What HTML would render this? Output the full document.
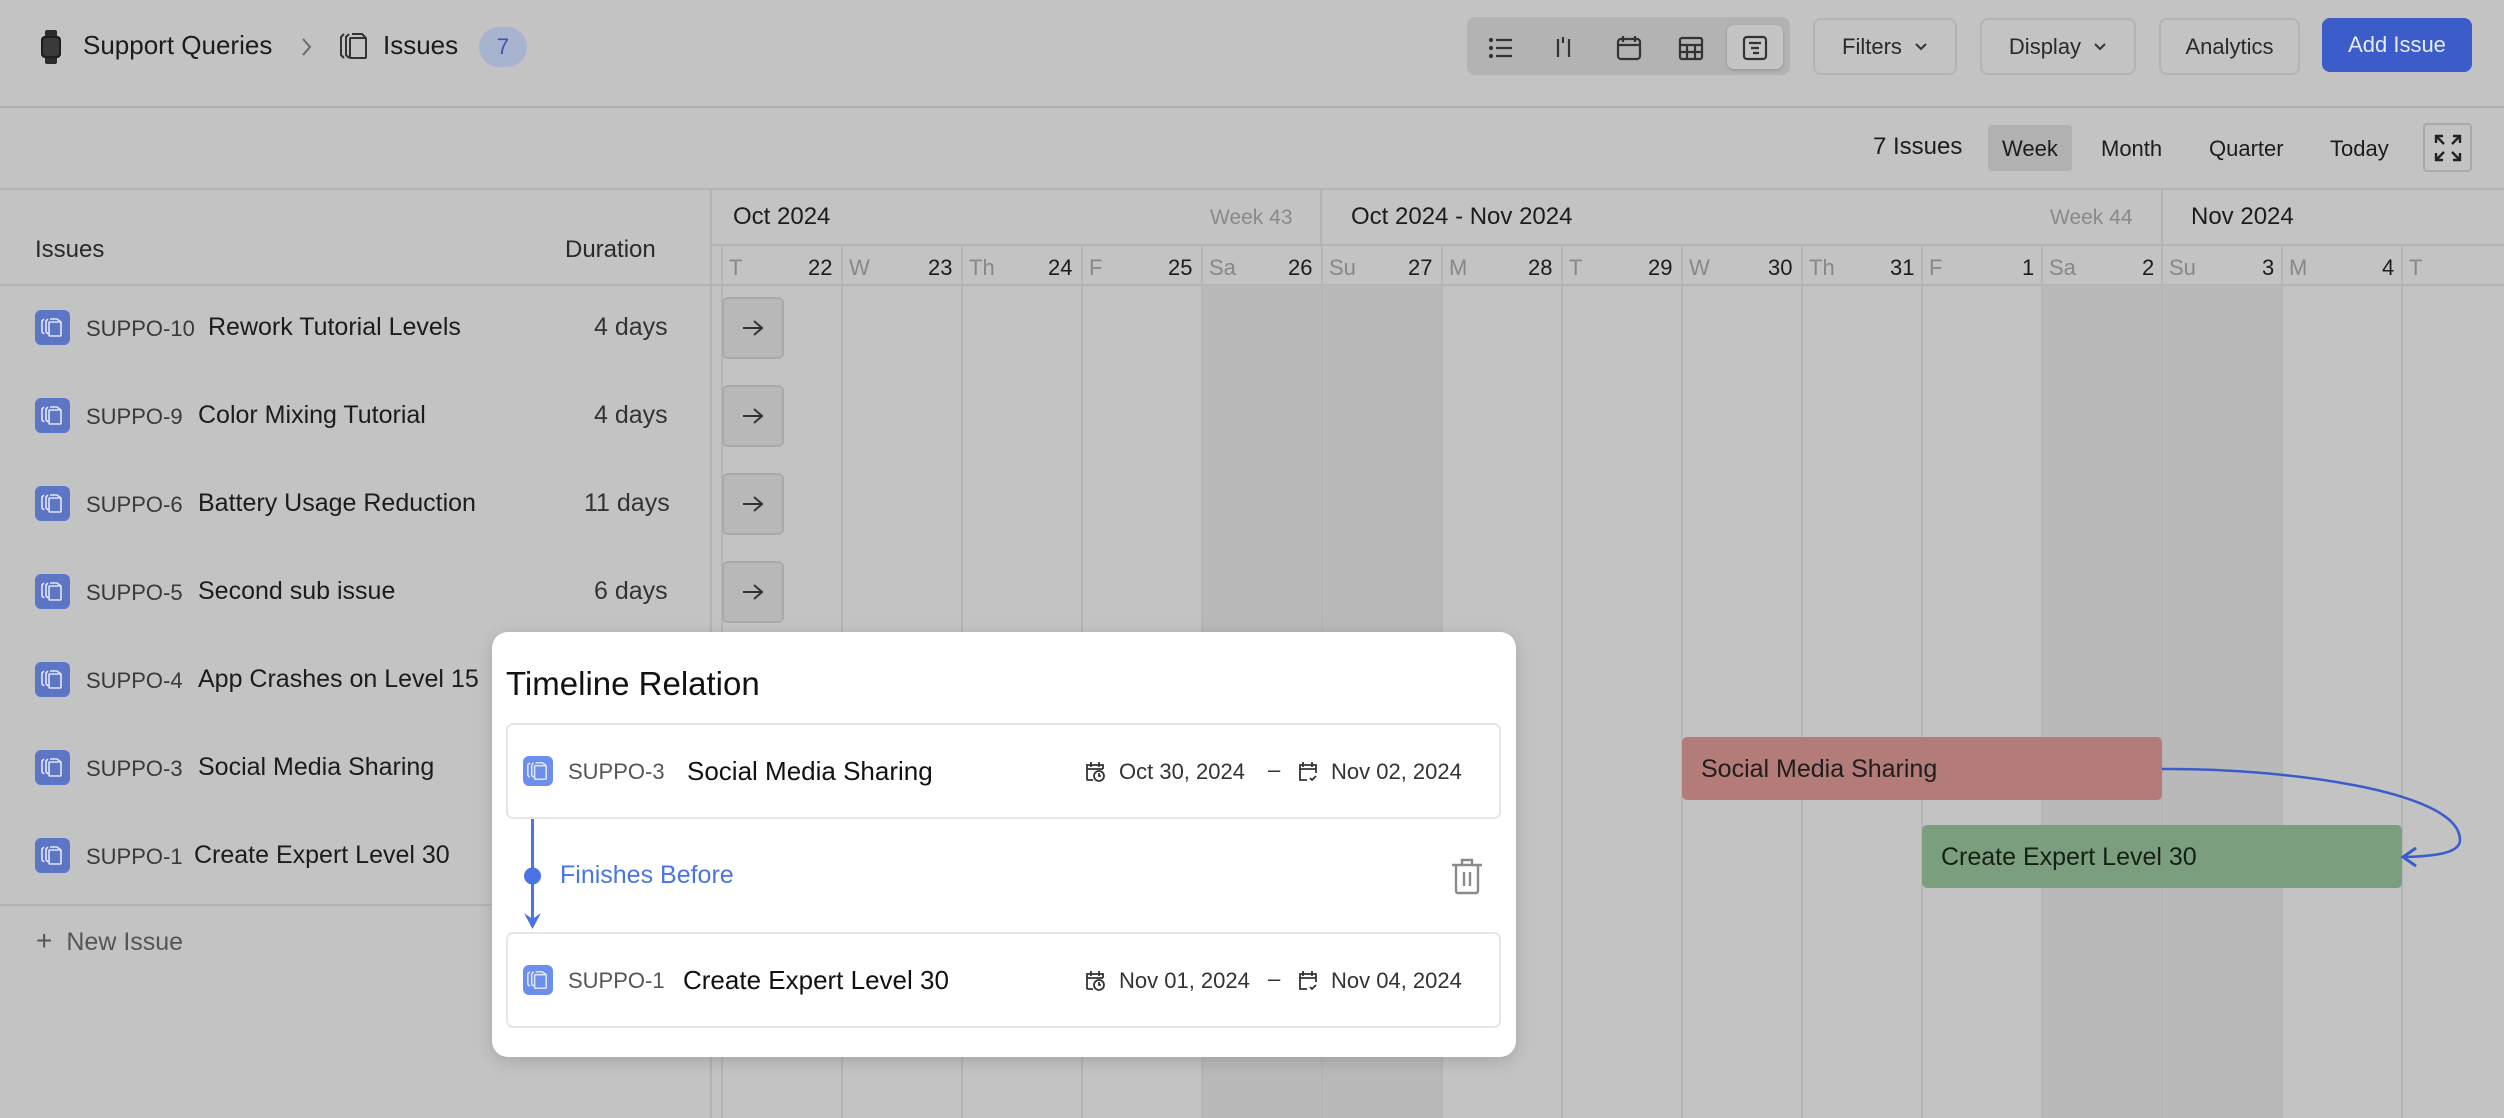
<!DOCTYPE html>
<html><head><meta charset="utf-8"><style>
*{box-sizing:border-box;margin:0;padding:0}
body{width:2504px;height:1118px;overflow:hidden;background:#c3c3c3;font-family:"Liberation Sans",sans-serif;color:#1c1c1c;position:relative}
.a{position:absolute}
.t{position:absolute;white-space:nowrap}
.btn{position:absolute;border:2px solid #b3b3b3;border-radius:8px;background:#c3c3c3;font-size:22px;color:#2a2a2a;display:flex;align-items:center;justify-content:center;gap:12px}
.vl{position:absolute;top:189px;width:2px;background:#b5b5b5}
.ic{position:absolute;width:35px;height:35px;border-radius:6px;background:#5c76c4}
.row .id{font-size:22px;color:#3a3a3a}
.arr{position:absolute;left:722px;width:62px;height:62px;border:2px solid #a9a9a9;border-radius:6px;background:#b8b8b8;display:flex;align-items:center;justify-content:center}
</style></head><body>
<div class="a" style="left:0;top:106px;width:2504px;height:2px;background:#b0b0b0"></div>
<svg class="a" style="left:40px;top:30px" width="22" height="34" viewBox="0 0 22 34"><rect x="5" y="0" width="12" height="34" rx="2" fill="#2b2b2b"/><rect x="1" y="6" width="20" height="22" rx="4" fill="#1e1e1e"/><rect x="3" y="8" width="16" height="18" rx="3" fill="#3a3a3a"/></svg>
<div class="t" style="left:83px;top:30px;font-size:26px">Support Queries</div>
<svg class="a" style="left:300px;top:36px" width="14" height="22"><path d="M3 3l7 8-7 8" stroke="#6a6a6a" stroke-width="2" fill="none"/></svg>
<svg class="a" style="left:338px;top:30px" width="32" height="32" viewBox="0 0 32 32" fill="none" stroke="#333" stroke-width="2"><path d="M6 4l-3 3v18l3 3M11 4l-3 3v18l3 3"/><rect x="12" y="8" width="16" height="20" rx="1"/><path d="M14 4h10l4 4"/></svg>
<div class="t" style="left:383px;top:30px;font-size:26px">Issues</div>
<div class="a" style="left:479px;top:27px;width:48px;height:40px;border-radius:20px;background:#a8b3cf;color:#3d57b5;font-size:22px;text-align:center;line-height:40px">7</div>

<div class="a" style="left:1467px;top:17px;width:323px;height:58px;border-radius:8px;background:#b3b3b3"></div>
<div class="a" style="left:1727px;top:25px;width:56px;height:44px;border-radius:7px;background:#c4c4c4;box-shadow:0 1px 3px rgba(0,0,0,.2)"></div>
<svg class="a" style="left:1488px;top:35px" width="280" height="26" viewBox="0 0 280 26" fill="none" stroke="#333" stroke-width="2.2">
<path d="M8 5h16M8 13h16M8 21h16"/><circle cx="3" cy="5" r="1" fill="#333"/><circle cx="3" cy="13" r="1" fill="#333"/><circle cx="3" cy="21" r="1" fill="#333"/>
<path d="M70 4v18M75 2v6M81 4v18"/>
<rect x="130" y="4" width="22" height="20" rx="3"/><path d="M130 10h22M135 1v6M147 1v6"/>
<rect x="192" y="3" width="22" height="21" rx="2"/><path d="M192 10h22M192 17h22M199 10v14M207 10v14"/>
<rect x="256" y="2" width="22" height="22" rx="3"/><path d="M261 8h12M263 13h8M265 18h6"/>
</svg>
<div class="btn" style="left:1813px;top:18px;width:144px;height:57px">Filters <svg width="14" height="10"><path d="M2 2l5 5 5-5" stroke="#333" stroke-width="2" fill="none"/></svg></div>
<div class="btn" style="left:1980px;top:18px;width:156px;height:57px">Display <svg width="14" height="10"><path d="M2 2l5 5 5-5" stroke="#333" stroke-width="2" fill="none"/></svg></div>
<div class="btn" style="left:2159px;top:18px;width:141px;height:57px">Analytics</div>
<div class="btn" style="left:2322px;top:18px;width:150px;height:54px;background:#3b5cc9;border-color:#3b5cc9;color:#e6ebf7">Add Issue</div>

<div class="a" style="left:0;top:188px;width:2504px;height:2px;background:#b3b3b3"></div>
<div class="t" style="left:1873px;top:133px;font-size:24px;color:#1c1c1c">7 Issues</div>
<div class="a" style="left:1988px;top:125px;width:84px;height:46px;border-radius:4px;background:#b1b1b1"></div>
<div class="t" style="left:2002px;top:136px;font-size:22px">Week</div>
<div class="t" style="left:2101px;top:136px;font-size:22px">Month</div>
<div class="t" style="left:2209px;top:136px;font-size:22px">Quarter</div>
<div class="t" style="left:2330px;top:136px;font-size:22px">Today</div>
<div class="a" style="left:2423px;top:123px;width:49px;height:49px;border:2px solid #aaa;border-radius:4px"></div>
<svg class="a" style="left:2433px;top:133px" width="30" height="30" fill="none" stroke="#222" stroke-width="2.4"><path d="M3 10V3h7M3 3l8 8M27 10V3h-7M27 3l-8 8M3 20v7h7M3 27l8-8M27 20v7h-7M27 27l-8-8"/></svg>

<div class="t" style="left:35px;top:236px;font-size:24px;color:#2a2a2a">Issues</div>
<div class="t" style="left:565px;top:236px;font-size:24px;color:#2a2a2a">Duration</div>
<div class="a" style="left:0;top:284px;width:711px;height:2px;background:#b3b3b3"></div>
<div class="a" style="left:710px;top:189px;width:2px;height:929px;background:#b3b3b3"></div>
<div class="a" style="left:0;top:904px;width:711px;height:2px;background:#b3b3b3"></div>
<div class="t" style="left:36px;top:925px;font-size:25px;color:#555"><span style="font-size:28px;margin-right:14px">+</span>New Issue</div>

<div class="a" style="left:711px;top:244px;width:1793px;height:2px;background:#b3b3b3"></div>
<div class="a" style="left:711px;top:284px;width:1793px;height:2px;background:#b3b3b3"></div>
<div class="a" style="left:1320px;top:189px;width:2px;height:56px;background:#b3b3b3"></div>
<div class="a" style="left:2161px;top:189px;width:2px;height:56px;background:#b3b3b3"></div>
<div class="t" style="left:733px;top:203px;font-size:24px">Oct 2024</div>
<div class="t" style="left:1210px;top:206px;font-size:21px;color:#8a8a8a">Week 43</div>
<div class="t" style="left:1351px;top:203px;font-size:24px">Oct 2024 - Nov 2024</div>
<div class="t" style="left:2050px;top:206px;font-size:21px;color:#8a8a8a">Week 44</div>
<div class="t" style="left:2191px;top:203px;font-size:24px">Nov 2024</div>

<div class="a" style="left:1202px;top:285px;width:240px;height:833px;background:#b9b9b9"></div>
<div class="a" style="left:2042px;top:285px;width:240px;height:833px;background:#b9b9b9"></div>
<div class="vl" style="left:721px;top:245px;height:873px"></div>
<div class="vl" style="left:841px;top:245px;height:873px"></div>
<div class="vl" style="left:961px;top:245px;height:873px"></div>
<div class="vl" style="left:1081px;top:245px;height:873px"></div>
<div class="vl" style="left:1201px;top:245px;height:873px"></div>
<div class="vl" style="left:1321px;top:245px;height:873px"></div>
<div class="vl" style="left:1441px;top:245px;height:873px"></div>
<div class="vl" style="left:1561px;top:245px;height:873px"></div>
<div class="vl" style="left:1681px;top:245px;height:873px"></div>
<div class="vl" style="left:1801px;top:245px;height:873px"></div>
<div class="vl" style="left:1921px;top:245px;height:873px"></div>
<div class="vl" style="left:2041px;top:245px;height:873px"></div>
<div class="vl" style="left:2161px;top:245px;height:873px"></div>
<div class="vl" style="left:2281px;top:245px;height:873px"></div>
<div class="vl" style="left:2401px;top:245px;height:873px"></div>

<div style="position:absolute;top:255px;left:0;font-size:22px">
<span class="t" style="left:729px;color:#888">T</span><span class="t" style="left:808px">22</span>
<span class="t" style="left:849px;color:#888">W</span><span class="t" style="left:928px">23</span>
<span class="t" style="left:969px;color:#888">Th</span><span class="t" style="left:1048px">24</span>
<span class="t" style="left:1089px;color:#888">F</span><span class="t" style="left:1168px">25</span>
<span class="t" style="left:1209px;color:#888">Sa</span><span class="t" style="left:1288px">26</span>
<span class="t" style="left:1329px;color:#888">Su</span><span class="t" style="left:1408px">27</span>
<span class="t" style="left:1449px;color:#888">M</span><span class="t" style="left:1528px">28</span>
<span class="t" style="left:1569px;color:#888">T</span><span class="t" style="left:1648px">29</span>
<span class="t" style="left:1689px;color:#888">W</span><span class="t" style="left:1768px">30</span>
<span class="t" style="left:1809px;color:#888">Th</span><span class="t" style="left:1890px">31</span>
<span class="t" style="left:1929px;color:#888">F</span><span class="t" style="left:2022px">1</span>
<span class="t" style="left:2049px;color:#888">Sa</span><span class="t" style="left:2142px">2</span>
<span class="t" style="left:2169px;color:#888">Su</span><span class="t" style="left:2262px">3</span>
<span class="t" style="left:2289px;color:#888">M</span><span class="t" style="left:2382px">4</span>
<span class="t" style="left:2409px;color:#888">T</span>
</div>

<svg width="0" height="0" style="position:absolute"><defs><g id="ii" fill="none" stroke="#dfe6f7" stroke-width="1.6"><path d="M9 9l-2 2v11l2 2M13 9l-2 2v11l2 2"/><rect x="14" y="12" width="12" height="14" rx="1"/><path d="M15 9h7l4 3"/></g></defs></svg>
<div class="row">
<div class="ic" style="top:310px;left:35px"><svg width="35" height="35"><use href="#ii"/></svg></div><div class="t id" style="left:86px;top:316px">SUPPO-10</div><div class="t" style="left:208px;top:313px;font-size:25px">Rework Tutorial Levels</div><div class="t" style="left:594px;top:313px;font-size:25px;color:#333">4 days</div>
<div class="ic" style="top:398px;left:35px"><svg width="35" height="35"><use href="#ii"/></svg></div><div class="t id" style="left:86px;top:404px">SUPPO-9</div><div class="t" style="left:198px;top:401px;font-size:25px">Color Mixing Tutorial</div><div class="t" style="left:594px;top:401px;font-size:25px;color:#333">4 days</div>
<div class="ic" style="top:486px;left:35px"><svg width="35" height="35"><use href="#ii"/></svg></div><div class="t id" style="left:86px;top:492px">SUPPO-6</div><div class="t" style="left:198px;top:489px;font-size:25px">Battery Usage Reduction</div><div class="t" style="left:584px;top:489px;font-size:25px;color:#333">11 days</div>
<div class="ic" style="top:574px;left:35px"><svg width="35" height="35"><use href="#ii"/></svg></div><div class="t id" style="left:86px;top:580px">SUPPO-5</div><div class="t" style="left:198px;top:577px;font-size:25px">Second sub issue</div><div class="t" style="left:594px;top:577px;font-size:25px;color:#333">6 days</div>
<div class="ic" style="top:662px;left:35px"><svg width="35" height="35"><use href="#ii"/></svg></div><div class="t id" style="left:86px;top:668px">SUPPO-4</div><div class="t" style="left:198px;top:665px;font-size:25px">App Crashes on Level 15</div>
<div class="ic" style="top:750px;left:35px"><svg width="35" height="35"><use href="#ii"/></svg></div><div class="t id" style="left:86px;top:756px">SUPPO-3</div><div class="t" style="left:198px;top:753px;font-size:25px">Social Media Sharing</div>
<div class="ic" style="top:838px;left:35px"><svg width="35" height="35"><use href="#ii"/></svg></div><div class="t id" style="left:86px;top:844px">SUPPO-1</div><div class="t" style="left:194px;top:841px;font-size:25px">Create Expert Level 30</div>
</div>
<div class="arr" style="top:297px"><svg width="24" height="20"><path d="M2 10h19M13 3l8 7-8 7" stroke="#333" stroke-width="2" fill="none"/></svg></div>
<div class="arr" style="top:385px"><svg width="24" height="20"><path d="M2 10h19M13 3l8 7-8 7" stroke="#333" stroke-width="2" fill="none"/></svg></div>
<div class="arr" style="top:473px"><svg width="24" height="20"><path d="M2 10h19M13 3l8 7-8 7" stroke="#333" stroke-width="2" fill="none"/></svg></div>
<div class="arr" style="top:561px"><svg width="24" height="20"><path d="M2 10h19M13 3l8 7-8 7" stroke="#333" stroke-width="2" fill="none"/></svg></div>

<div class="a" style="left:1682px;top:737px;width:480px;height:63px;border-radius:5px;background:#b47c79"></div>
<div class="t" style="left:1701px;top:755px;font-size:25px;color:#1e1e1e">Social Media Sharing</div>
<div class="a" style="left:1922px;top:825px;width:480px;height:63px;border-radius:5px;background:#7b9e7e"></div>
<div class="t" style="left:1941px;top:843px;font-size:25px;color:#152015">Create Expert Level 30</div>
<svg class="a" style="left:2160px;top:760px" width="344" height="110" fill="none" stroke="#3b5cc9" stroke-width="2.5"><path d="M2 9C120 8 300 30 300 80C300 92 280 96 245 97"/><path d="M256 88L243 97L256 106" stroke-width="3"/></svg>

<div class="a" style="left:492px;top:632px;width:1024px;height:425px;border-radius:16px;background:#fff;box-shadow:0 4px 16px rgba(0,0,0,.15)"></div>
<div class="t" style="left:506px;top:665px;font-size:33px;color:#111">Timeline Relation</div>
<div class="a" style="left:506px;top:723px;width:995px;height:96px;border:2px solid #e6e6e6;border-radius:7px"></div>
<div class="a" style="left:506px;top:932px;width:995px;height:96px;border:2px solid #e6e6e6;border-radius:7px"></div>
<div class="ic" style="left:523px;top:756px;width:30px;height:30px;background:#6c8fee"><svg width="30" height="30" viewBox="2 2 31 31"><use href="#ii"/></svg></div>
<div class="ic" style="left:523px;top:965px;width:30px;height:30px;background:#6c8fee"><svg width="30" height="30" viewBox="2 2 31 31"><use href="#ii"/></svg></div>
<div class="t" style="left:568px;top:759px;font-size:22px;color:#555">SUPPO-3</div>
<div class="t" style="left:687px;top:756px;font-size:26px;color:#111">Social Media Sharing</div>
<div class="t" style="left:568px;top:968px;font-size:22px;color:#555">SUPPO-1</div>
<div class="t" style="left:683px;top:965px;font-size:26px;color:#111">Create Expert Level 30</div>
<svg width="0" height="0" style="position:absolute"><defs>
<g id="c1" fill="none" stroke="#333" stroke-width="1.8"><path d="M9 20H4a1 1 0 0 1-1-1V5h16v4M3 9h16M7 2v5M15 2v5"/><circle cx="15" cy="16" r="5"/><path d="M15 13v3h2"/></g>
<g id="c2" fill="none" stroke="#333" stroke-width="1.8"><path d="M11 20H4V5h16v8M3 9h17M7 2v5M16 2v5"/><path d="M14 18l2 2 4-4"/></g>
</defs></svg>
<svg class="a" style="left:1084px;top:760px" width="24" height="24"><use href="#c1"/></svg>
<div class="t" style="left:1119px;top:759px;font-size:22px;color:#333">Oct 30, 2024</div>
<div class="t" style="left:1268px;top:757px;font-size:22px;color:#333">–</div>
<svg class="a" style="left:1296px;top:760px" width="24" height="24"><use href="#c2"/></svg>
<div class="t" style="left:1331px;top:759px;font-size:22px;color:#333">Nov 02, 2024</div>
<svg class="a" style="left:1084px;top:969px" width="24" height="24"><use href="#c1"/></svg>
<div class="t" style="left:1119px;top:968px;font-size:22px;color:#333">Nov 01, 2024</div>
<div class="t" style="left:1268px;top:966px;font-size:22px;color:#333">–</div>
<svg class="a" style="left:1296px;top:969px" width="24" height="24"><use href="#c2"/></svg>
<div class="t" style="left:1331px;top:968px;font-size:22px;color:#333">Nov 04, 2024</div>
<svg class="a" style="left:518px;top:819px" width="30" height="115" fill="#4a74e6" stroke="#4a74e6"><path d="M14.5 0v108" stroke-width="3"/><circle cx="14.5" cy="57" r="8"/><path d="M6 94l8.5 16 8.5-16l-8.5 6z" stroke="none"/></svg>
<div class="t" style="left:560px;top:861px;font-size:25px;color:#4a74e6">Finishes Before</div>
<svg class="a" style="left:1450px;top:857px" width="34" height="38" fill="none" stroke="#8a8a8a" stroke-width="2.4"><path d="M2 8h30M12 8V3h10v5"/><path d="M6 8v26a2 2 0 0 0 2 2h18a2 2 0 0 0 2-2V8M14 15v14M20 15v14"/></svg>
</body></html>
